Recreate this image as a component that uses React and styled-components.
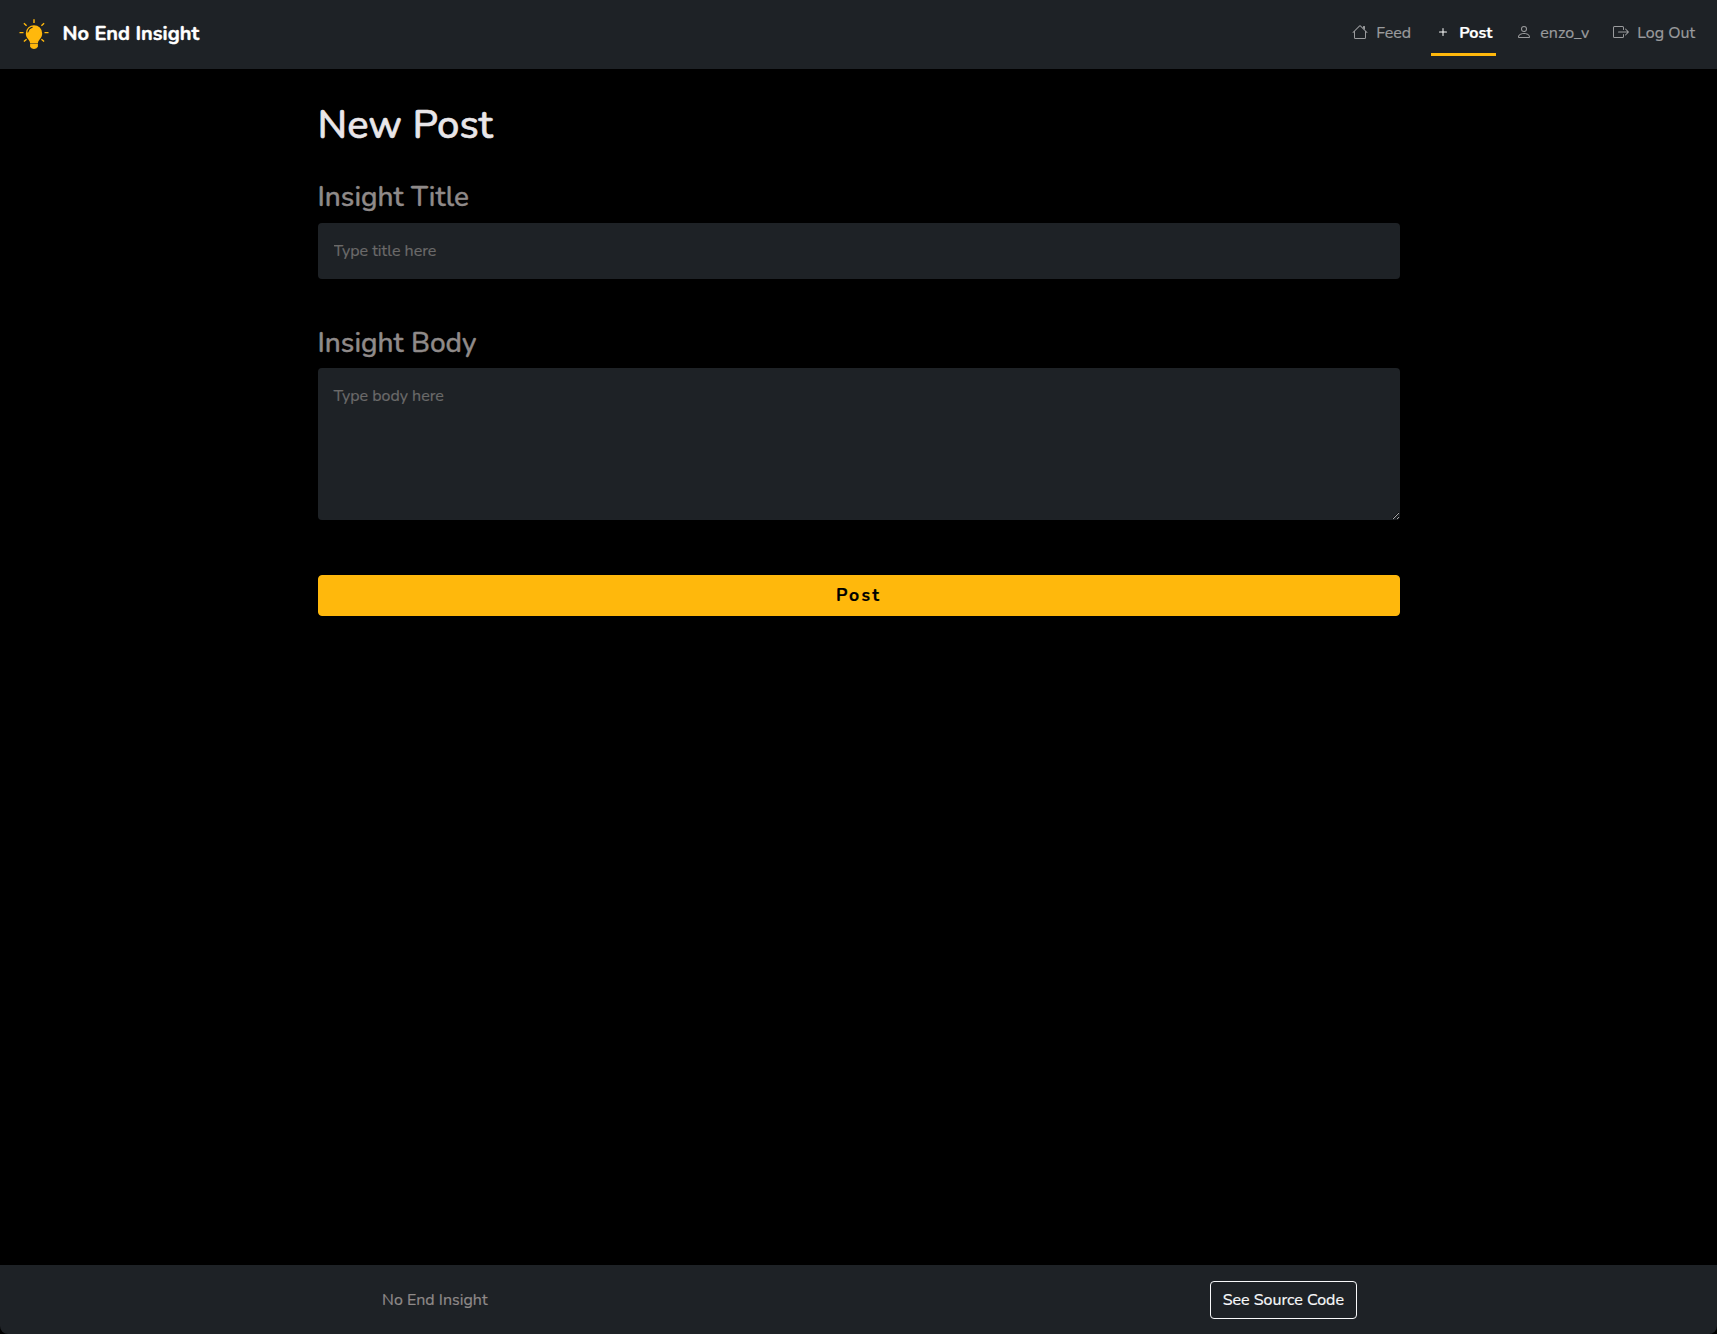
import React from "react";
import styled, { createGlobalStyle, css } from "styled-components";
import { BsPlus } from "react-icons/bs";

const color = {
  page: "#000000",
  panel: "#1e2226",
  accent: "#ffb80c",
  heading: "#e9e6e9",
  label: "#8f8a89",
  placeholder: "#6b6a6a",
  navLink: "#9a9b9d",
  light: "#f8f9fa",
};

const GlobalStyle = createGlobalStyle`
  *, *::before, *::after {
    box-sizing: border-box;
  }
  body {
    margin: 0;
    background: ${color.page};
    font-family: Nunito, Lato, "Open Sans", sans-serif;
    font-size: 16px;
    line-height: 1.5;
    -webkit-font-smoothing: antialiased;
    -webkit-text-stroke: 0.2px currentColor;
  }
`;

const Page = styled.div`
  display: flex;
  flex-direction: column;
  min-height: 100vh;
`;

const Navbar = styled.header`
  display: flex;
  align-items: center;
  justify-content: space-between;
  height: 69px;
  padding: 0 18px 0 19px;
  background: ${color.panel};
`;

const Brand = styled.a`
  display: flex;
  align-items: center;
  gap: 13.5px;
  height: 30px;
  margin-bottom: 1px;
  color: #ffffff;
  font-size: 20px;
  font-weight: 700;
  line-height: 30px;
  text-decoration: none;
  -webkit-text-stroke: 0.4px currentColor;
`;

const Nav = styled.nav`
  display: flex;
  gap: 16px;
`;

const NavLink = styled.a`
  height: 43px;
  padding: 8px 4px;
  border-bottom: 3px solid transparent;
  color: ${color.navLink};
  line-height: 24px;
  text-decoration: none;
  white-space: nowrap;

  svg {
    width: 16px;
    height: 16px;
    margin-right: 8px;
    vertical-align: -2px;
  }

  ${({ $active }) =>
    $active &&
    css`
      border-color: ${color.accent};
      color: #ffffff;
      font-weight: 700;
    `}
`;

const Main = styled.main`
  flex: 1;
  width: 1082px;
  margin: 0 auto;
  padding-top: 32px;
`;

const Title = styled.h1`
  margin: 0 0 32px;
  color: ${color.heading};
  font-size: 40px;
  font-weight: 500;
  line-height: 1.2;
  -webkit-text-stroke: 0.6px currentColor;
`;

const Form = styled.form`
  display: flex;
  flex-direction: column;
`;

const Field = styled.div`
  display: flex;
  flex-direction: column;
  gap: 8px;
  margin-bottom: 48px;
`;

const Label = styled.label`
  color: ${color.label};
  font-size: 28px;
  font-weight: 500;
  line-height: 1.2;
  -webkit-text-stroke: 0.4px currentColor;
`;

const control = css`
  display: block;
  width: 100%;
  margin: 0;
  padding: 16px;
  border: 0;
  border-radius: 4px;
  outline: 0;
  background: ${color.panel};
  color: ${color.light};
  font: inherit;

  &::placeholder {
    color: ${color.placeholder};
    opacity: 1;
  }
`;

const TextInput = styled.input`
  ${control}
  height: 56px;
`;

const TextArea = styled.textarea`
  ${control}
  height: 152px;
  resize: vertical;
`;

const SubmitButton = styled.button`
  height: 41px;
  margin-top: 7px;
  padding: 6px 12px;
  border: 1px solid ${color.accent};
  border-radius: 4px;
  background: ${color.accent};
  color: #000000;
  font-family: inherit;
  font-size: 17.6px;
  font-weight: 700;
  letter-spacing: 2.2px;
  line-height: 1.5;
`;

const Footer = styled.footer`
  height: 69px;
  border-radius: 0 0 8px 8px;
  background: ${color.panel};
`;

const FooterInner = styled.div`
  display: flex;
  align-items: center;
  justify-content: space-between;
  width: 1082px;
  height: 100%;
  margin: 0 auto;
  padding: 0 42.6px 0 64.6px;
`;

const FooterText = styled.span`
  color: ${color.label};
`;

const SourceButton = styled.a`
  padding: 6px 12px;
  border: 1px solid ${color.light};
  border-radius: 4px;
  color: ${color.light};
  text-decoration: none;
`;

const BulbLogo = () => (
  <svg width="30" height="30" viewBox="0 0 30 30" fill="none">
    <path
      d="M15 6.2a8.2 8.2 0 0 0-8.2 8.2c0 2.7 1.2 4.5 2.6 6.1 1 1.2 1.6 2.4 1.7 4h7.8c.1-1.6.7-2.8 1.7-4 1.4-1.6 2.6-3.4 2.6-6.1A8.2 8.2 0 0 0 15 6.2z"
      fill={color.accent}
    />
    <path
      d="M11.1 25.1h7.8v2.4c0 .6-.4 1-.9 1.1-.4 1-1.5 1.4-3 1.4s-2.6-.4-3-1.4c-.5-.1-.9-.5-.9-1.1z"
      fill={color.accent}
    />
    <path d="M8.9 13c.5-2.4 1.9-4 4.3-4.7" stroke={color.panel} strokeWidth="1.1" strokeLinecap="round" />
    <path
      d="M15 .2v3.7M.5 13.6h4M25.5 13.6h4M4.9 4.2l2.7 2.6M25.1 4.2l-2.7 2.6M4.9 22.6l2.7-2.4M25.1 22.6l-2.7-2.4"
      stroke={color.accent}
      strokeWidth="1.4"
    />
  </svg>
);

const HouseIcon = () => (
  <svg viewBox="0 0 16 16" fill="currentColor">
    <path
      fillRule="evenodd"
      d="M2 13.5V7h1v6.5a.5.5 0 0 0 .5.5h9a.5.5 0 0 0 .5-.5V7h1v6.5a1.5 1.5 0 0 1-1.5 1.5h-9A1.5 1.5 0 0 1 2 13.5zm11-11V6l-2-2V2.5a.5.5 0 0 1 .5-.5h1a.5.5 0 0 1 .5.5z"
    />
    <path
      fillRule="evenodd"
      d="M7.293 1.5a1 1 0 0 1 1.414 0l6.647 6.646a.5.5 0 0 1-.708.708L8 2.207 1.354 8.854a.5.5 0 1 1-.708-.708L7.293 1.5z"
    />
  </svg>
);

const PersonIcon = () => (
  <svg viewBox="0 0 16 16" fill="currentColor">
    <path d="M8 8a3 3 0 1 0 0-6 3 3 0 0 0 0 6zm2-3a2 2 0 1 1-4 0 2 2 0 0 1 4 0zm4 8c0 1-1 1-1 1H3s-1 0-1-1 1-4 6-4 6 3 6 4zm-1-.004c-.001-.246-.154-.986-.832-1.664C11.516 10.68 10.289 10 8 10c-2.29 0-3.516.68-4.168 1.332-.678.678-.83 1.418-.832 1.664h10z" />
  </svg>
);

const BoxArrowRightIcon = () => (
  <svg viewBox="0 0 16 16" fill="currentColor">
    <path
      fillRule="evenodd"
      d="M10 12.5a.5.5 0 0 1-.5.5h-8a.5.5 0 0 1-.5-.5v-9a.5.5 0 0 1 .5-.5h8a.5.5 0 0 1 .5.5v2a.5.5 0 0 0 1 0v-2A1.5 1.5 0 0 0 9.5 2h-8A1.5 1.5 0 0 0 0 3.5v9A1.5 1.5 0 0 0 1.5 14h8a1.5 1.5 0 0 0 1.5-1.5v-2a.5.5 0 0 0-1 0v2z"
    />
    <path
      fillRule="evenodd"
      d="M15.854 8.354a.5.5 0 0 0 0-.708l-3-3a.5.5 0 0 0-.708.708L14.293 7.5H5.5a.5.5 0 0 0 0 1h8.793l-2.147 2.146a.5.5 0 0 0 .708.708l3-3z"
    />
  </svg>
);

export default function App() {
  return (
    <>
      <GlobalStyle />
      <Page>
        <Navbar>
          <Brand>
            <BulbLogo />
            No End Insight
          </Brand>
          <Nav>
            <NavLink><HouseIcon />Feed</NavLink>
            <NavLink $active><BsPlus />Post</NavLink>
            <NavLink><PersonIcon />enzo_v</NavLink>
            <NavLink><BoxArrowRightIcon />Log Out</NavLink>
          </Nav>
        </Navbar>
        <Main>
          <Title>New Post</Title>
          <Form>
            <Field>
              <Label htmlFor="title">Insight Title</Label>
              <TextInput id="title" placeholder="Type title here" />
            </Field>
            <Field>
              <Label htmlFor="body">Insight Body</Label>
              <TextArea id="body" placeholder="Type body here" />
            </Field>
            <SubmitButton type="button">Post</SubmitButton>
          </Form>
        </Main>
        <Footer>
          <FooterInner>
            <FooterText>No End Insight</FooterText>
            <SourceButton>See Source Code</SourceButton>
          </FooterInner>
        </Footer>
      </Page>
    </>
  );
}
